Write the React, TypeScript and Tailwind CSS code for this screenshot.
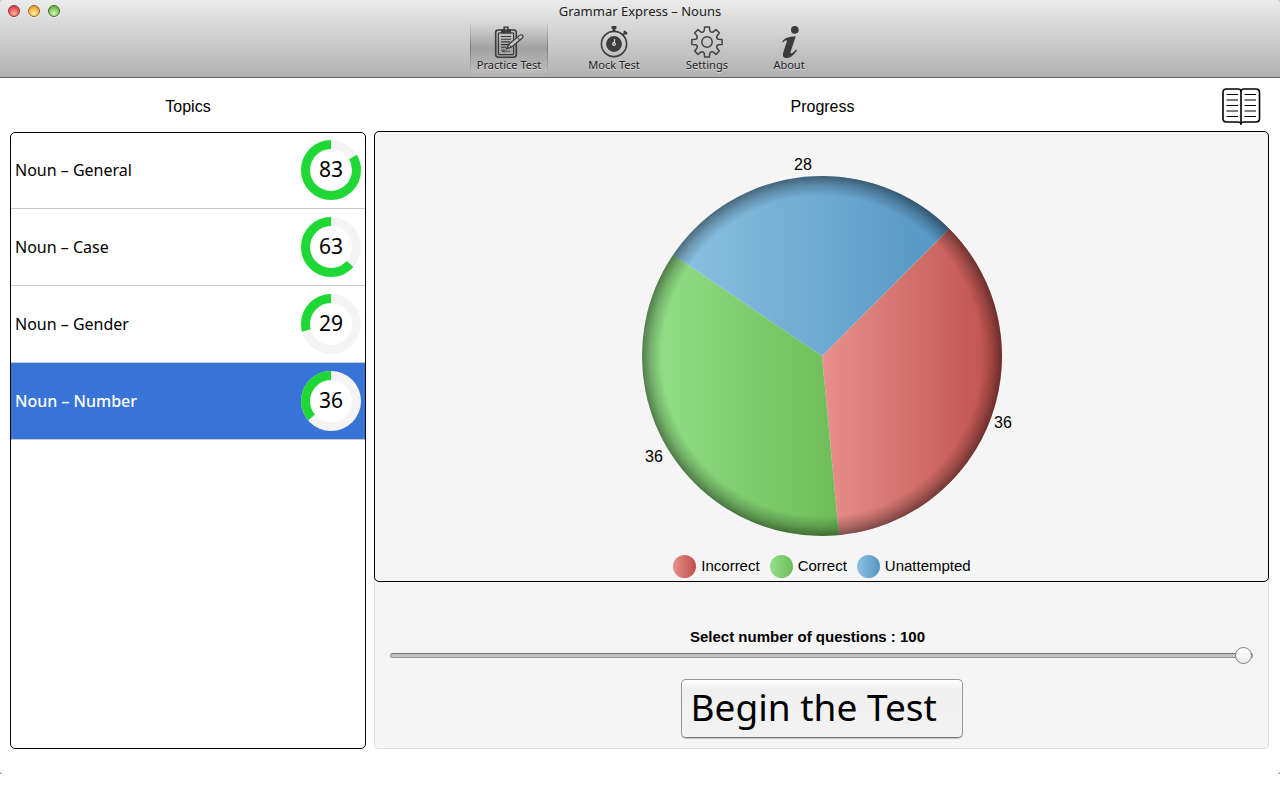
import { useState } from 'react';
import type { ReactNode } from 'react';
import clsx from 'clsx';

interface Topic {
  name: string;
  score: number;
}

const topics: Topic[] = [
  { name: 'Noun – General', score: 83 },
  { name: 'Noun – Case', score: 63 },
  { name: 'Noun – Gender', score: 29 },
  { name: 'Noun – Number', score: 36 },
];

const results = [
  { label: 'Incorrect', value: 36, from: '#e8908c', to: '#bd4f4b', labelX: 381, labelY: 280 },
  { label: 'Correct', value: 36, from: '#94e08a', to: '#6ebc58', labelX: 32, labelY: 314 },
  { label: 'Unattempted', value: 28, from: '#8cc2e2', to: '#5594c2', labelX: 181, labelY: 22 },
];

function point(cx: number, cy: number, r: number, degrees: number) {
  const a = (degrees * Math.PI) / 180;
  return `${(cx + r * Math.cos(a)).toFixed(2)} ${(cy + r * Math.sin(a)).toFixed(2)}`;
}

function ClipboardIcon() {
  return (
    <svg width="32" height="32" viewBox="0 0 32 32" fill="none" stroke="#3c3c3c" aria-hidden="true">
      <rect x="2.7" y="4" width="20.6" height="27.2" rx="2.6" strokeWidth="1.6" />
      <rect x="5.4" y="6.8" width="15.2" height="21.8" rx="0.8" strokeWidth="1.2" />
      <path d="M8 7.4V3.2H10.4V0.4H15.6V3.2H18V7.4z" fill="#3c3c3c" stroke="none" />
      <rect x="12" y="1.8" width="2" height="1.6" fill="#bbb" stroke="none" />
      <path d="M8 10.5h10M8 13.2h10M8 15.9h9M8 18.6h7M8 21.3h5M8 24h4" strokeWidth="1.1" />
      <path d="M13.5 22.8l2.4-4.600L26.600 9.4c1-.8 2.3-.9 3 0s.5 2-.5 2.900L18.3 21.3z" fill="#c4c4c4" strokeWidth="1.2" />
      <path d="M15.9 18.2l2.4 3.1M24.3 11.3l2.4 3M13.5 22.8l2.5-1.9" strokeWidth="1" />
      <path d="M9 26c1.5-1.5 2.5.5 3.8-.6s2 .5 4.2-.2" strokeWidth="1" />
    </svg>
  );
}

function StopwatchIcon() {
  return (
    <svg width="32" height="32" viewBox="0 0 32 32" fill="none" stroke="#3c3c3c" aria-hidden="true">
      <circle cx="16" cy="18" r="12.6" strokeWidth="1.6" />
      <circle cx="16" cy="18" r="7.9" fill="#3c3c3c" stroke="none" />
      <path d="M13.6 0h4.800v3h-1v2.400h-2.800V3h-1z" fill="#3c3c3c" stroke="none" />
      <path d="M24.600 9.400l3-3" strokeWidth="1.800" />
      <path d="M25.900 5.200l3 3" strokeWidth="2.400" />
      <circle cx="16" cy="18" r="1.900" fill="#ddd" stroke="none" />
      <path d="M16 17.500l.8-4.500" stroke="#ddd" strokeWidth="1.100" />
      <circle cx="16" cy="18" r="0.700" fill="#3c3c3c" stroke="none" />
    </svg>
  );
}

function GearIcon() {
  const teeth = [0, 45, 90, 135, 180, 225, 270, 315];
  const outline = teeth
    .map((t, i) => {
      const start = `${i === 0 ? 'M' : 'L'}${point(16, 16, 11.6, t - 14)}`;
      return `${start} L${point(16, 16, 15.3, t - 9)} L${point(16, 16, 15.3, t + 9)} L${point(16, 16, 11.6, t + 14)} Q${point(16, 16, 9.8, t + 22.5)} ${point(16, 16, 11.6, t + 31)}`;
    })
    .join(' ');

  return (
    <svg width="32" height="32" viewBox="0 0 32 32" fill="none" stroke="#444" strokeWidth="1.500" strokeLinejoin="round" aria-hidden="true">
      <path d={`${outline} Z`} />
      <circle cx="16" cy="16" r="5.200" />
    </svg>
  );
}

function InfoIcon() {
  return (
    <svg width="32" height="32" viewBox="0 0 32 32" fill="#3c3c3c" aria-hidden="true">
      <circle cx="21.800" cy="3.900" r="3.800" />
      <path d="M9.300 15.600C12 11.800 15 10.800 22.800 10.300L17.700 25.500c-.9 3 1.200 2.600 5.400-2l.9.700C20.500 29.600 17 32 13.500 32c-3.200 0-4.200-2.200-3.200-5.500l3.300-10.300c.8-2.500-.8-2.600-3.500.2z" />
    </svg>
  );
}

function BookIcon() {
  return (
    <svg width="39" height="37" viewBox="0 0 39 37" fill="none" stroke="#000" aria-hidden="true">
      <path d="M19 2.800C18.500 1.500 17.500 1 16 1H4.500C2.200 1 1 2.200 1 4.500v26C1 32.800 2.200 34 4.500 34H16c1.500 0 2.600.3 3 1.500.4-1.200 1.500-1.500 3-1.500h12c2.300 0 3.500-1.200 3.500-3.500v-26C37.500 2.200 36.300 1 34 1H22c-1.500 0-2.500.5-3 1.800z" strokeWidth="1.600" />
      <path d="M19 2v32" strokeWidth="1.600" />
      <path d="M17.100 34h3.800L19 37z" fill="#000" stroke="none" />
      <path d="M4.500 6.500h11.500M4.500 17.500h11.500M4.500 28.500h11.500M22.500 6.500h11.500M22.500 17.500h11.500M22.500 28.500h11.500" strokeWidth="1.200" />
      <path d="M4.500 12h11.500M4.500 23h11.500M22.500 12h11.500M22.500 23h11.500" stroke="#555" strokeWidth="1.600" />
    </svg>
  );
}

function TrafficLight({ label, color }: { label: string; color: string }) {
  return (
    <button
      type="button"
      aria-label={label}
      className={clsx('h-3 w-3 rounded-full border shadow-[0_1px_0_rgba(255,255,255,0.5)]', color)}
    />
  );
}

interface ToolbarButtonProps {
  label: string;
  className: string;
  children: ReactNode;
}

function ToolbarButton({ label, className, children }: ToolbarButtonProps) {
  return (
    <button
      type="button"
      className={clsx('flex h-[50px] flex-col items-center pt-[3px] text-[11px] leading-[14px] whitespace-nowrap text-[#222]', className)}
    >
      {children}
      <span className="[text-shadow:0_1px_0_rgba(255,255,255,0.5)]">{label}</span>
    </button>
  );
}

function ScoreRing({ score }: { score: number }) {
  const length = 2 * Math.PI * 25.5;

  return (
    <svg width="60" height="60" viewBox="0 0 60 60" aria-label={`${score}`}>
      <circle cx="30" cy="30" r="30" fill="#f4f4f4" />
      <circle cx="30" cy="30" r="21" fill="#fff" />
      {/* runs anticlockwise from twelve o'clock */}
      <circle
        cx="30"
        cy="30"
        r="25.500"
        fill="none"
        stroke="#20d835"
        strokeWidth="9"
        strokeDasharray={`${(length * score) / 100} ${length}`}
        transform="translate(60 0) scale(-1 1) rotate(-90 30 30)"
      />
      <text x="30" y="37" textAnchor="middle" fontSize="21" fill="#000">
        {score}
      </text>
    </svg>
  );
}

function PieChart() {
  const cx = 200;
  const cy = 208;
  const r = 180;
  let angle = -45;

  const slices = results.map((item) => {
    const start = angle;
    angle += item.value * 3.6;
    return {
      ...item,
      d: `M${cx} ${cy} L${point(cx, cy, r, start)} A${r} ${r} 0 0 1 ${point(cx, cy, r, angle)} Z`,
    };
  });

  return (
    <svg width="400" height="400" viewBox="0 0 400 400" role="img" aria-label="Progress">
      <defs>
        {slices.map((s) => (
          <linearGradient key={s.label} id={s.label}>
            <stop offset="0" stopColor={s.from} />
            <stop offset="1" stopColor={s.to} />
          </linearGradient>
        ))}
        <radialGradient id="edge">
          <stop offset="0.890" stopColor="#000" stopOpacity="0" />
          <stop offset="0.950" stopColor="#000" stopOpacity="0.200" />
          <stop offset="1" stopColor="#000" stopOpacity="0.440" />
        </radialGradient>
      </defs>
      {slices.map((s) => (
        <path key={s.label} d={s.d} fill={`url(#${s.label})`} />
      ))}
      <circle cx={cx} cy={cy} r={r} fill="url(#edge)" />
      {slices.map((s) => (
        <text key={s.label} x={s.labelX} y={s.labelY} textAnchor="middle" fontSize="16" fill="#000">
          {s.value}
        </text>
      ))}
    </svg>
  );
}

function Legend() {
  return (
    <ul className="flex gap-[10px] text-[15px] leading-6">
      {results.map((item) => (
        <li key={item.label} className="flex items-center gap-[5px]">
          <span
            className="h-[23px] w-[23px] rounded-full"
            style={{ background: `linear-gradient(to right, ${item.from}, ${item.to})` }}
          />
          {item.label}
        </li>
      ))}
    </ul>
  );
}

export default function App() {
  const [selected, setSelected] = useState(3);
  const [questions, setQuestions] = useState(100);

  return (
    <div className="bg-white font-['Noto_Sans',sans-serif] text-black">
      {/* Title bar and toolbar */}
      <div className="bg-[#c8c8c8]">
        <header className="rounded-t-[4px] border-b border-[#666] bg-linear-to-b from-[#ebebeb] to-[#b1b1b1]">
          <div className="grid h-[23px] grid-cols-[1fr_auto_1fr] items-center px-2 pb-[2px]">
            <div className="flex gap-2">
              <TrafficLight
                label="Close"
                color="border-[#8c3a3a] bg-[radial-gradient(circle_at_50%_75%,#ffb0a8,#f0575a_55%,#c23038)]"
              />
              <TrafficLight
                label="Minimize"
                color="border-[#96692c] bg-[radial-gradient(circle_at_50%_75%,#fff0a0,#f5b64a_55%,#cc8422)]"
              />
              <TrafficLight
                label="Zoom"
                color="border-[#48702f] bg-[radial-gradient(circle_at_50%_75%,#d4f7b0,#84c860_55%,#4f9638)]"
              />
            </div>
            <h1 className="text-[13px] leading-4 text-[#222]">Grammar Express – Nouns</h1>
          </div>
          <nav className="flex h-[54px] justify-center gap-[38px] pr-1">
            <ToolbarButton
              label="Practice Test"
              className="w-[78px] border-x border-[#8a8a8a] bg-linear-to-b from-[#d8d8d8] via-[#a2a2a2] to-[#bcbcbc] [border-image:linear-gradient(to_bottom,#d0d0d0,#777,#b8b8b8)_1]"
            >
              <ClipboardIcon />
            </ToolbarButton>
            <ToolbarButton label="Mock Test" className="w-[56px]">
              <StopwatchIcon />
            </ToolbarButton>
            <ToolbarButton label="Settings" className="w-[54px]">
              <GearIcon />
            </ToolbarButton>
            <ToolbarButton label="About" className="w-[34px]">
              <InfoIcon />
            </ToolbarButton>
          </nav>
        </header>
      </div>

      <main className="flex gap-2 pr-[11px] pl-[10px]">
        {/* Topics */}
        <section className="flex w-[356px] shrink-0 flex-col">
          <h2 className="flex h-[54px] items-center justify-center pt-1 font-['Liberation_Sans',sans-serif] text-[16px]">
            Topics
          </h2>
          <ul className="flex-1 overflow-hidden rounded-[5px] border border-black">
            {topics.map((topic, index) => (
              <li key={topic.name} className="border-b border-[#c8c8c8]">
                <button
                  type="button"
                  onClick={() => setSelected(index)}
                  className={clsx(
                    'flex w-full items-center justify-between px-1 text-left text-[16px]',
                    index === 0 ? 'h-[75px] pb-px' : 'h-[76px]',
                    index === selected && 'bg-[#3874d8]',
                  )}
                >
                  <span className={clsx(index === selected && 'font-medium text-white')}>{topic.name}</span>
                  <ScoreRing score={topic.score} />
                </button>
              </li>
            ))}
          </ul>
        </section>

        {/* Progress */}
        <section className="min-w-0 flex-1 font-['Liberation_Sans',sans-serif]">
          <div className="grid h-[53px] grid-cols-[1fr_auto_1fr] items-center pt-1 pr-2">
            <h2 className="col-start-2 pt-px pl-[10px] text-[16px]">Progress</h2>
            <button type="button" aria-label="Lessons" className="justify-self-end">
              <BookIcon />
            </button>
          </div>
          <div className="rounded-[5px] border border-[#dcdcdc] border-t-transparent bg-[#f5f5f5]">
            <div className="-mx-px -mt-px flex h-[451px] flex-col items-center rounded-[5px] border border-black pt-4 pl-px">
              <PieChart />
              <div className="pt-1.5">
                <Legend />
              </div>
            </div>
            <div className="flex flex-col items-center px-[15px] pt-[45px] pb-[10px]">
              <label htmlFor="questions" className="pr-7 text-[15px] leading-5 font-bold">
                Select number of questions : {questions}
              </label>
              <input
                id="questions"
                type="range"
                min={1}
                max={100}
                value={questions}
                onChange={(e) => setQuestions(Number(e.target.value))}
                className="h-[17px] w-full appearance-none bg-transparent [&::-webkit-slider-runnable-track]:h-[5px] [&::-webkit-slider-runnable-track]:rounded-full [&::-webkit-slider-runnable-track]:border [&::-webkit-slider-runnable-track]:border-[#999] [&::-webkit-slider-runnable-track]:border-t-[#777] [&::-webkit-slider-runnable-track]:bg-[#c2c2c2] [&::-webkit-slider-thumb]:mt-[-7px] [&::-webkit-slider-thumb]:h-[17px] [&::-webkit-slider-thumb]:w-[17px] [&::-webkit-slider-thumb]:appearance-none [&::-webkit-slider-thumb]:rounded-full [&::-webkit-slider-thumb]:border [&::-webkit-slider-thumb]:border-[#808080] [&::-webkit-slider-thumb]:bg-linear-to-b [&::-webkit-slider-thumb]:from-white [&::-webkit-slider-thumb]:to-[#ececec]"
              />
              <button
                type="button"
                className="mt-[15px] h-[59px] w-[282px] rounded-[5px] border border-[#999] border-b-[#777] bg-linear-to-b from-white via-[#f0f0f0] via-15% to-[#f2f2f2] pb-1 pl-[9px] text-left font-['Noto_Sans',sans-serif] text-[37px] leading-none shadow-[0_1px_1px_rgba(0,0,0,0.2)]"
              >
                Begin the Test
              </button>
            </div>
          </div>
        </section>
      </main>

      {/* Bottom corners of the window */}
      <footer className="flex h-[25px] items-end justify-between">
        <svg width="2" height="2" viewBox="0 0 3 3" fill="#999" aria-hidden="true">
          <path d="M0 0L3 3H0z" />
        </svg>
        <svg width="2" height="2" viewBox="0 0 3 3" fill="#999" aria-hidden="true">
          <path d="M3 0L0 3H3z" />
        </svg>
      </footer>
    </div>
  );
}
